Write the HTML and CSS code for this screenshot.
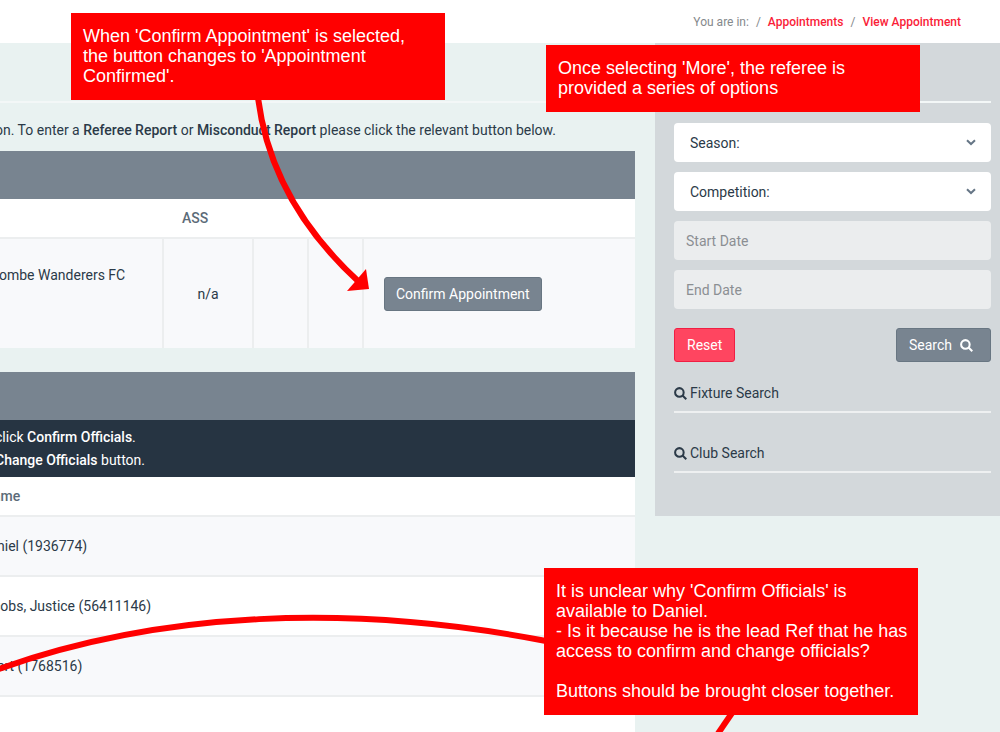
FILE: index.html
```html
<!DOCTYPE html>
<html lang="en">
<head>
    <meta charset="UTF-8">
    <meta name="viewport" content="width=device-width, initial-scale=1.0">
    <title>View Appointment</title>
    <link rel="stylesheet" href="styles.css">
</head>
<body>
    <header class="topbar">
        <nav class="breadcrumb" aria-label="Breadcrumb">
            <span>You are in:</span>
            <span>/</span>
            <a href="#">Appointments</a>
            <span>/</span>
            <a href="#">View Appointment</a>
        </nav>
    </header>

    <div class="content">
        <main class="main">
            <div class="page-title"></div>
            <p class="intro">on. To enter a <strong>Referee Report</strong> or <strong>Misconduct Report</strong> please click the relevant button below.</p>

            <section class="panel">
                <div class="panel-heading"></div>
                <table class="table fixture">
                    <colgroup>
                        <col class="col-teams">
                        <col class="col-ass">
                        <col class="col-small">
                        <col class="col-small">
                        <col>
                    </colgroup>
                    <thead>
                        <tr>
                            <th></th>
                            <th class="ass">ASS</th>
                            <th></th>
                            <th></th>
                            <th></th>
                        </tr>
                    </thead>
                    <tbody>
                        <tr>
                            <td class="teams">ombe Wanderers FC</td>
                            <td class="center">n/a</td>
                            <td></td>
                            <td></td>
                            <td class="action"><button type="button" class="btn btn-grey">Confirm Appointment</button></td>
                        </tr>
                    </tbody>
                </table>
            </section>

            <section class="panel panel-officials">
                <div class="panel-heading"></div>
                <div class="panel-info">
                    <p>click <strong>Confirm Officials</strong>.</p>
                    <p><strong>Change Officials</strong> button.</p>
                </div>
                <table class="table officials">
                    <thead>
                        <tr><th>ame</th></tr>
                    </thead>
                    <tbody>
                        <tr><td>niel (1936774)</td></tr>
                        <tr><td class="long">cobs, Justice (56411146)</td></tr>
                        <tr><td>ert (1768516)</td></tr>
                    </tbody>
                </table>
            </section>
        </main>

        <aside class="sidebar">
            <div class="page-title"></div>
            <form class="search-form">
                <div class="select">
                    <select aria-label="Season">
                        <option>Season:</option>
                    </select>
                    <svg class="chevron" viewBox="0 0 10 7" aria-hidden="true"><path d="M1 1.2 5 5l4-3.8"/></svg>
                </div>
                <div class="select">
                    <select aria-label="Competition">
                        <option>Competition:</option>
                    </select>
                    <svg class="chevron" viewBox="0 0 10 7" aria-hidden="true"><path d="M1 1.2 5 5l4-3.8"/></svg>
                </div>
                <input type="text" class="date" placeholder="Start Date" aria-label="Start Date">
                <input type="text" class="date" placeholder="End Date" aria-label="End Date">
                <div class="buttons">
                    <button type="reset" class="btn btn-red">Reset</button>
                    <button type="button" class="btn btn-grey btn-search">Search
                        <svg class="icon" viewBox="0 0 14 14" aria-hidden="true"><circle cx="5.8" cy="5.8" r="4.6"/><path d="m9.2 9.2 4 4"/></svg>
                    </button>
                </div>
            </form>
            <h4 class="side-title">
                <svg class="icon" viewBox="0 0 14 14" aria-hidden="true"><circle cx="5.8" cy="5.8" r="4.6"/><path d="m9.2 9.2 4 4"/></svg>
                Fixture Search
            </h4>
            <h4 class="side-title">
                <svg class="icon" viewBox="0 0 14 14" aria-hidden="true"><circle cx="5.8" cy="5.8" r="4.6"/><path d="m9.2 9.2 4 4"/></svg>
                Club Search
            </h4>
        </aside>
    </div>

    <!-- Review notes over the page -->
    <svg class="arrows" width="1000" height="732" viewBox="0 0 1000 732" aria-hidden="true">
        <path class="line" d="M258 98C266 160 296 224 358 281"/>
        <path class="head" d="M366 269 369 289 347 291z"/>
        <path class="line" d="M-4 670C160 611 350 603 546 641"/>
        <path class="line" d="M732 713 717 735"/>
    </svg>
    <div class="note note-confirm">When 'Confirm Appointment' is selected,<br>the button changes to 'Appointment<br>Confirmed'.</div>
    <div class="note note-more">Once selecting 'More', the referee is<br>provided a series of options</div>
    <div class="note note-officials">
        <p>It is unclear why 'Confirm Officials' is<br>available to Daniel.</p>
        <p>- Is it because he is the lead Ref that he has<br>access to confirm and change officials?</p>
        <p class="spaced">Buttons should be brought closer together.</p>
    </div>
</body>
</html>
```

FILE: styles.css
```css
* {
    box-sizing: border-box;
}

body {
    position: relative;
    display: flex;
    flex-direction: column;
    height: 100vh;
    margin: 0;
    overflow: hidden;
    background-color: #e9f2f1;
    color: #2b3a48;
    font-family: Roboto, "Liberation Sans", sans-serif;
    font-size: 14px;
    line-height: 20px;
}

p {
    margin: 0;
}

strong {
    font-weight: 500;
}

/* Top bar */
.topbar {
    display: flex;
    justify-content: flex-end;
    align-items: center;
    height: 43px;
    flex: none;
    padding-right: 39px;
    background-color: #fff;
}

.breadcrumb {
    display: flex;
    gap: 7px;
    font-size: 12px;
    color: #85898c;
}

.breadcrumb a {
    color: #fa1d38;
    font-weight: 500;
    text-decoration: none;
}

/* Columns */
.content {
    display: flex;
    flex: 1;
    align-items: flex-start;
    gap: 20px;
}

.main {
    display: flex;
    flex-direction: column;
    flex: 1;
    align-self: stretch;
    margin-left: -8px;
}

.page-title {
    height: 60px;
    border-bottom: 2px solid #f3f7f7;
}

.intro {
    padding: 17px 0 11px 3px;
}

/* Panels */
.panel {
    margin-bottom: 24px;
}

.panel-heading {
    height: 48px;
    background-color: #788490;
}

.panel-info {
    padding: 6px 0 5px 3px;
    background-color: #263442;
    color: #fff;
    line-height: 23px;
}

.panel-officials {
    flex: 1;
    margin-bottom: 0;
    background-color: #fff;
}

.table {
    width: 100%;
    border-collapse: separate;
    border-spacing: 0;
    table-layout: fixed;
    background-color: #fff;
}

.table th {
    height: 40px;
    padding: 0;
    border-bottom: 2px solid #eceeef;
    color: #5c6b78;
    font-weight: 500;
    text-align: left;
}

.table td {
    padding: 0;
}

.fixture td {
    height: 109px;
    border-right: 2px solid #eceeef;
    background-color: #f8f9fb;
}

.fixture td:last-child {
    border-right: 0;
}

.col-teams {
    width: 172px;
}

.col-ass {
    width: 90px;
}

.col-small {
    width: 55px;
}

.fixture .ass {
    padding-left: 18px;
}

.fixture .teams {
    padding: 26px 0 0 7px;
    vertical-align: top;
}

.center {
    text-align: center;
}

.fixture .action {
    padding-left: 20px;
}

.officials td {
    height: 60px;
    padding-left: 5px;
    border-bottom: 2px solid #eceeef;
}

.officials tr:nth-child(odd) td {
    background-color: #f8f9fb;
}

.officials th,
.officials .long {
    padding-left: 1px;
}

/* Buttons */
.btn {
    height: 34px;
    padding: 0 12px;
    border: 1px solid;
    border-radius: 3px;
    color: #fff;
    font: inherit;
    cursor: pointer;
}

.action .btn {
    padding: 0 11px;
}

.btn-grey {
    border-color: #687682;
    background-color: #788490;
}

.btn-red {
    border-color: #f01e43;
    background-color: #ff4560;
}

.btn-search {
    display: flex;
    align-items: center;
    gap: 8px;
    padding-right: 17px;
}

.icon {
    width: 13px;
    height: 13px;
    fill: none;
    stroke: currentColor;
    stroke-width: 2.2;
}

/* Sidebar */
.sidebar {
    width: 345px;
    height: 473px;
    padding: 0 9px 0 19px;
    background-color: #d3d8db;
}

.search-form {
    display: flex;
    flex-direction: column;
    gap: 10px;
    padding-top: 20px;
}

.select {
    display: grid;
    align-items: center;
}

.select select,
.chevron {
    grid-area: 1 / 1;
}

.select select,
.date {
    width: 100%;
    height: 39px;
    padding: 0 12px;
    border: 0;
    border-radius: 4px;
    background-color: #ebedee;
    color: #2b3a48;
    font: inherit;
}

.select select {
    appearance: none;
    padding: 0 16px;
    background-color: #fff;
}

.date::placeholder {
    color: #8b8f93;
}

.chevron {
    justify-self: end;
    width: 10px;
    height: 7px;
    margin-right: 15px;
    fill: none;
    stroke: #667686;
    stroke-width: 2;
    pointer-events: none;
}

.buttons {
    display: flex;
    justify-content: space-between;
    padding: 9px 0 13px;
}

.side-title {
    display: flex;
    align-items: center;
    gap: 3px;
    height: 38px;
    margin: 0 0 22px;
    border-bottom: 2px solid #eef0f1;
    font-size: 14px;
    font-weight: 400;
}

/* Review notes */
.arrows {
    position: absolute;
    top: 0;
    left: 0;
    pointer-events: none;
}

.arrows .line {
    fill: none;
    stroke: #f00;
    stroke-width: 6;
}

.arrows .head {
    fill: #f00;
}

.note {
    position: absolute;
    width: 374px;
    padding: 13px 0 14px 12px;
    background-color: #f00;
    color: #fff;
    font-family: "Liberation Sans", Arial, sans-serif;
    font-size: 18px;
}

.note-confirm {
    top: 13px;
    left: 71px;
}

.note-more {
    top: 45px;
    left: 546px;
}

.note-officials {
    top: 568px;
    left: 544px;
}

.note .spaced {
    margin-top: 20px;
}
```
